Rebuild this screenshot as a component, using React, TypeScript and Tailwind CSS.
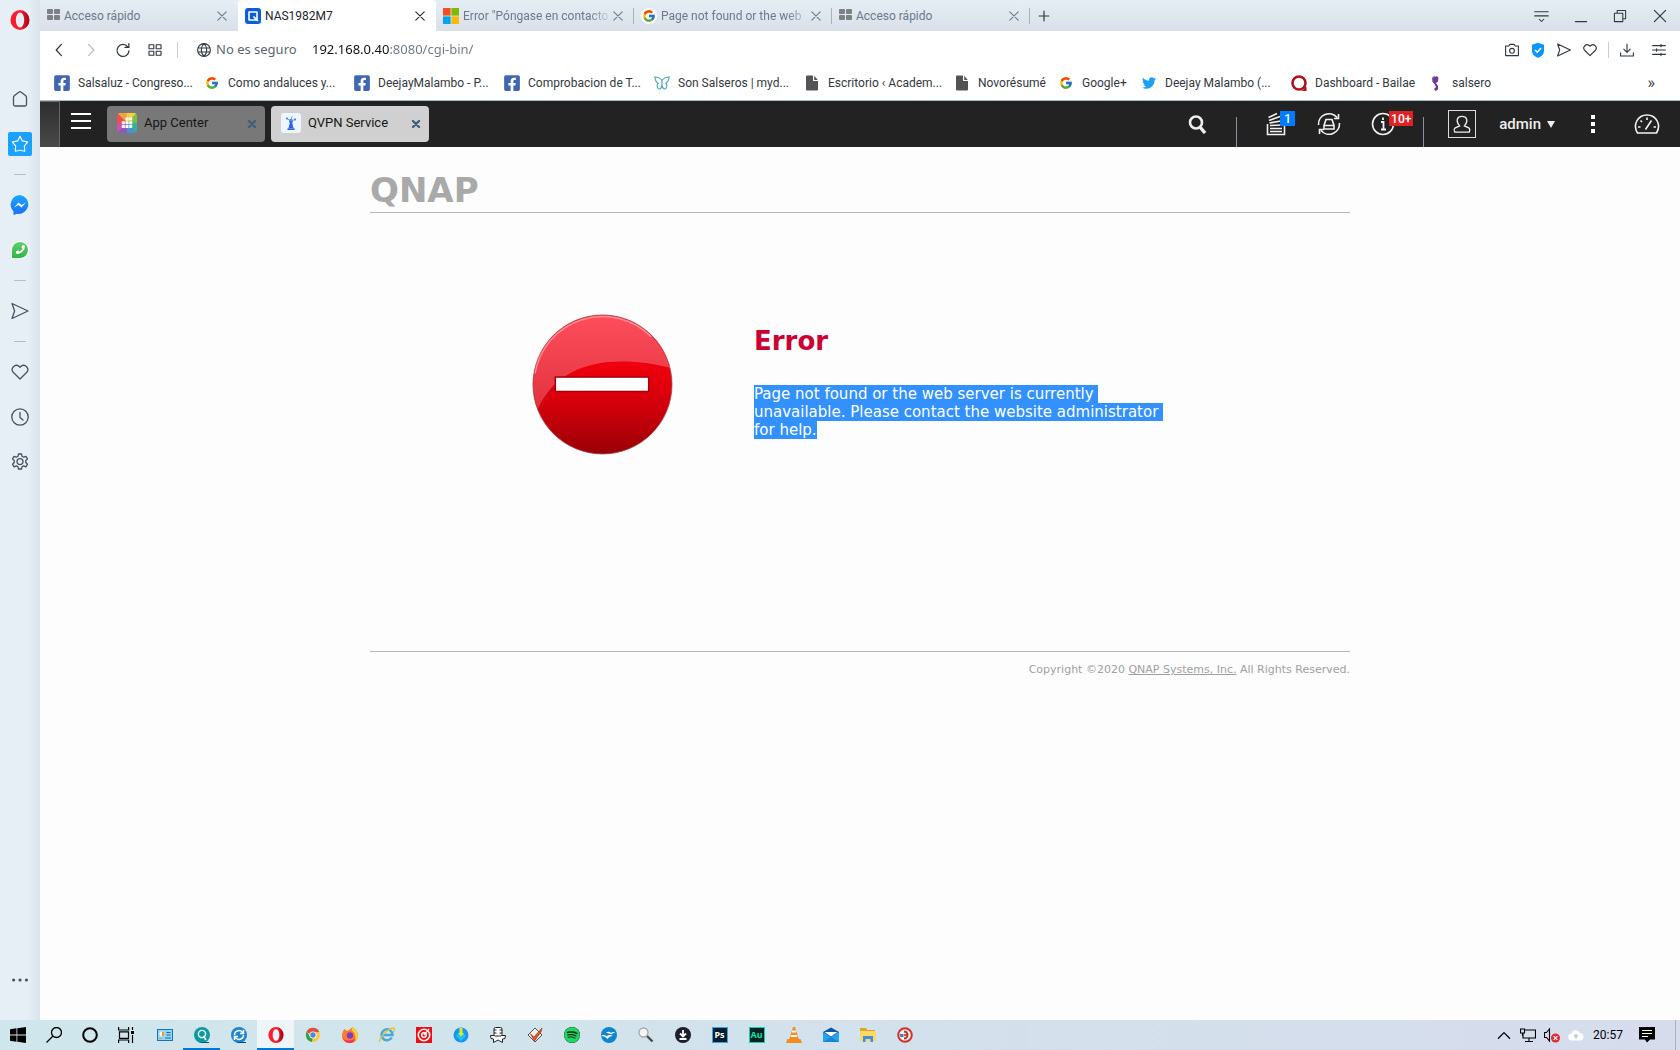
import { useState } from 'react';
import type { ReactNode } from 'react';
import clsx from 'clsx';
import { FcGoogle } from 'react-icons/fc';
import { FaFacebookSquare, FaTwitter, FaSpotify, FaPhoneAlt } from 'react-icons/fa';

/* ---------- icons ---------- */

type IconProps = { className?: string };

function Line({ className = 'size-5', d, width = 1.3 }: IconProps & { d: string; width?: number }) {
  return (
    <svg
      className={className}
      viewBox="0 0 20 20"
      fill="none"
      stroke="currentColor"
      strokeWidth={width}
      strokeLinecap="round"
      strokeLinejoin="round"
      aria-hidden="true"
    >
      <path d={d} />
    </svg>
  );
}

const paths = {
  home: 'M8.8 3.200Q10 2.200 11.200 3.200L15.500 6.600Q16.500 7.500 16.500 8.500V15.500a1.500 1.500 0 0 1-1.500 1.500H5a1.500 1.500 0 0 1-1.500-1.500V8.500Q3.500 7.500 4.500 6.600Z',
  star: 'M10 1.500 12.500 6.600 18.500 7.800 14.900 12.200 15.200 18 10 17 4.800 18 5.100 12.200 1.500 7.800 7.500 6.600Z',
  send: 'M2 2.500 18 10 2 17.500 4.600 10Z',
  heart: 'M10 17 3.200 10.300A4.200 4.200 0 0 1 9 4.300L10 5.300 11 4.300A4.200 4.200 0 0 1 16.800 10.300Z',
  clock: 'M10 1.800A8.200 8.200 0 1 1 10 18.200 8.200 8.200 0 1 1 10 1.800M10 5.500V10.500L13 13',
  gear: 'M8.500 2h3l.5 2.300 1.700.9 2.200-.9 1.600 2.600-1.700 1.600v2l1.700 1.700-1.600 2.600-2.200-.9-1.700.9-.5 2.200h-3L8 14.800l-1.700-.9-2.200.9-1.600-2.600 1.700-1.700v-2L2.500 6.900l1.600-2.600 2.200.9L8 4.300ZM10 6.700a3 3 0 1 1 0 6 3 3 0 1 1 0-6',
  close: 'M3 3 17 17M17 3 3 17',
  back: 'M13 3 6.500 10 13 17',
  forward: 'M7 3 13.500 10 7 17',
  plus: 'M10 2V18M2 10H18',
  reload: 'M16 6A7.500 7.500 0 1 0 17.500 11M17.300 2V6.800H12.500',
  speedDial: 'M2.500 3.500h6v5h-6ZM11.500 3.500h6v5h-6ZM2.500 11.500h6v5h-6ZM11.500 11.500h6v5h-6Z',
  globe: 'M10 2A8 8 0 1 1 10 18 8 8 0 1 1 10 2M10 2C5.500 6 5.500 14 10 18M10 2C14.500 6 14.500 14 10 18M2.500 7.500H17.500M2.500 12.500H17.500',
  camera: 'M2 5H6L7.500 3H12.500L14 5H18V17H2ZM10 8A3 3 0 1 1 10 14 3 3 0 1 1 10 8',
  download: 'M10 2.500V12.500M6 9 10 13 14 9M2 13.500V17.500H18V13.500',
  sliders: 'M2 4.500H18M2 10H18M2 15.500H18M12.500 3V6M7 8.500V11.500M12.500 14V17',
  more: 'M2 10h.1M10 10h.1M18 10h.1',
};

function OperaIcon({ className = 'size-5' }: IconProps) {
  return (
    <svg className={className} viewBox="0 0 20 20" aria-hidden="true">
      <defs>
        <linearGradient id="opera" x1="0" x2="1">
          <stop offset="0" stopColor="#ff1b2d" />
          <stop offset=".55" stopColor="#fa1e2e" />
          <stop offset="1" stopColor="#a00213" />
        </linearGradient>
      </defs>
      <path
        fill="url(#opera)"
        fillRule="evenodd"
        d="M10 0a9.500 10 0 1 1 0 20 9.500 10 0 1 1 0-20ZM10 2.600a4.200 7.400 0 1 0 0 14.800 4.200 7.400 0 1 0 0-14.800Z"
      />
    </svg>
  );
}

function SpeedDialIcon() {
  return (
    <svg className="size-[13px]" viewBox="0 0 13 13" fill="#7d8084" aria-hidden="true">
      <rect width="6" height="5" rx="1" />
      <rect x="7" width="6" height="5" rx="1" />
      <rect y="6" width="6" height="5" rx="1" />
      <rect x="7" y="6" width="6" height="5" rx="1" />
    </svg>
  );
}

function NasIcon() {
  return (
    <svg className="size-4" viewBox="0 0 16 16" aria-hidden="true">
      <rect width="16" height="16" rx="3" fill="#0a5fd8" />
      <path d="M4 4h8v8H4Z" fill="none" stroke="#fff" strokeWidth="1.600" strokeLinejoin="round" />
      <path d="m8.500 8.500 4.500 4.500" stroke="#fff" strokeWidth="1.600" />
    </svg>
  );
}

function MicrosoftIcon() {
  return (
    <svg className="size-4" viewBox="0 0 16 16" aria-hidden="true">
      <path fill="#f25022" d="M0 0h7.600v7.600H0z" />
      <path fill="#7fba00" d="M8.400 0H16v7.600H8.400z" />
      <path fill="#00a4ef" d="M0 8.400h7.600V16H0z" />
      <path fill="#ffb900" d="M8.400 8.400H16V16H8.400z" />
    </svg>
  );
}

function DocIcon() {
  return (
    <svg className="size-4" viewBox="0 0 16 16" fill="#535457" aria-hidden="true">
      <path d="M2 1.500a1 1 0 0 1 1-1h6V6h5v8.500a1 1 0 0 1-1 1H3a1 1 0 0 1-1-1ZM10.200.8 13.800 5h-3.600Z" />
    </svg>
  );
}

function ButterflyIcon() {
  return (
    <svg className="size-4" viewBox="0 0 16 16" fill="none" stroke="#4fa9b5" strokeWidth="1.200" aria-hidden="true">
      <path d="M8 5.500C6.500 3 3.500 2 .8 2c.4 3 1.600 5.500 3.400 6.300C2.500 9.500 3 13 5 14c1.500 0 2.500-1.500 3-3.500.5 2 1.500 3.500 3 3.500 2-1 2.500-4.500.8-5.700C13.600 7.500 14.800 5 15.200 2 12.500 2 9.500 3 8 5.500Zm0 0v6" />
    </svg>
  );
}

function BailaeIcon() {
  return (
    <svg className="size-4" viewBox="0 0 16 16" aria-hidden="true">
      <circle cx="8" cy="8" r="6.500" fill="none" stroke="#a81419" strokeWidth="2.600" />
      <path d="M9 16c3 0 4-2 5-4h1.500v4Z" fill="#a81419" />
    </svg>
  );
}

function SalseroIcon() {
  return (
    <svg className="size-4" viewBox="0 0 16 16" fill="#6f3b93" aria-hidden="true">
      <path d="M4 1.500 5 3l1-2.500L7 2l2-1 1.500 2-.5 3.500L8 8l2 3v3.500L7.500 16 6 14l2-2-1.500-3-2-2Z" />
    </svg>
  );
}

function ShieldIcon() {
  return (
    <svg className="size-4" viewBox="0 0 16 16" aria-hidden="true">
      <path d="M8 .8 14 2.800V8.500c0 4-2.500 6-6 7.200C4.500 14.500 2 12.500 2 8.500V2.800Z" fill="#0a95ff" />
      <path d="m5 8 2.200 2.200L11 6" fill="none" stroke="#fff" strokeWidth="1.600" />
    </svg>
  );
}

/* ---------- browser chrome ---------- */

const browserTabs = [
  { id: 1, title: 'Acceso rápido', icon: <SpeedDialIcon /> },
  { id: 2, title: 'NAS1982M7', icon: <NasIcon /> },
  { id: 3, title: 'Error "Póngase en contacto', icon: <MicrosoftIcon /> },
  {
    id: 4,
    title: 'Page not found or the web',
    icon: (
      <span className="rounded-full bg-white p-px">
        <FcGoogle className="size-[14px]" />
      </span>
    ),
  },
  { id: 5, title: 'Acceso rápido', icon: <SpeedDialIcon /> },
];

function TabBar() {
  const [active, setActive] = useState(2);

  return (
    <div className="flex h-[31px] items-stretch bg-linear-to-b from-[#e5edf5] to-[#d9e0e9] text-[#6d7a88]">
      {browserTabs.map((tab) => (
        <div
          key={tab.id}
          className={clsx(
            'flex w-[198px] shrink-0 items-center',
            tab.id === active && 'rounded-t-sm bg-white text-[#20262e]'
          )}
        >
          <button onClick={() => setActive(tab.id)} className="flex min-w-0 flex-1 items-center gap-1 pl-[7px]">
            {tab.icon}
            <span
              className={clsx(
                'flex-1 text-left font-[Roboto,sans-serif] text-xs whitespace-nowrap',
                (tab.id === 3 || tab.id === 4) && 'mask-r-from-85%'
              )}
            >
              {tab.title}
            </span>
          </button>
          <button aria-label={`Cerrar ${tab.title}`} className="mr-[9px]">
            <Line d={paths.close} className="size-3" width={1.8} />
          </button>
          <span className={clsx('h-4 w-px', tab.id >= 3 ? 'bg-[#a9b1ba]' : 'bg-transparent')} />
        </div>
      ))}
      <button aria-label="Nueva pestaña" className="ml-2 text-[#303840]">
        <Line d={paths.plus} className="size-3" width={2} />
      </button>
      <div className="mr-3 ml-auto flex items-center gap-[25px] text-[#303840]">
        <button aria-label="Menú de pestañas">
          <Line d="M1 5H19M1 10.500H19M7 15l3 3 3-3" className="size-[15px]" width={1.400} />
        </button>
        <button aria-label="Minimizar">
          <Line d="M2 18H18" className="size-[14px]" width={1.600} />
        </button>
        <button aria-label="Restaurar">
          <Line d="M2 6H14V18H2ZM6 6V2H18V14H14" className="size-[14px]" width={1.500} />
        </button>
        <button aria-label="Cerrar">
          <Line d={paths.close} className="size-4" width={1.500} />
        </button>
      </div>
    </div>
  );
}

function AddressBar() {
  const [url, setUrl] = useState('192.168.0.40:8080/cgi-bin/');

  return (
    <div className="flex h-[38px] items-center pr-[13px] pl-[11px] text-[#2f3740]">
      <div className="flex items-center gap-4">
        <button aria-label="Atrás">
          <Line d={paths.back} className="size-4" width={1.600} />
        </button>
        <button aria-label="Adelante" className="text-[#b9bec4]">
          <Line d={paths.forward} className="size-4" width={1.600} />
        </button>
        <button aria-label="Recargar">
          <Line d={paths.reload} className="size-4" width={1.600} />
        </button>
        <button aria-label="Acceso rápido">
          <Line d={paths.speedDial} className="size-4" width={1.400} />
        </button>
      </div>
      <span className="mr-[18px] ml-[14px] h-4 w-px bg-[#c9cdd2]" />
      <Line d={paths.globe} className="size-4" width={1.400} />
      <span className="ml-1 w-[96px] text-[13px] text-[#5c6670]">No es seguro</span>
      <input
        aria-label="Dirección"
        value={url}
        onChange={(e) => setUrl(e.target.value)}
        className="min-w-0 flex-1 bg-linear-[to_right,#111_78px,#6a7785_78px] bg-clip-text text-[13px] text-transparent outline-none"
      />
      <div className="flex items-center gap-[10px]">
        <button aria-label="Instantánea">
          <Line d={paths.camera} className="size-4" width={1.400} />
        </button>
        <button aria-label="Bloqueador de anuncios">
          <ShieldIcon />
        </button>
        <button aria-label="Enviar a Mi flujo">
          <Line d={paths.send} className="size-4" width={1.400} />
        </button>
        <button aria-label="Añadir a marcadores">
          <Line d={paths.heart} className="size-4" width={1.400} />
        </button>
        <span className="h-4 w-px bg-[#c9cdd2]" />
        <button aria-label="Descargas">
          <Line d={paths.download} className="size-4" width={1.400} />
        </button>
        <button aria-label="Configuración rápida" className="ml-[6px]">
          <Line d={paths.sliders} className="size-4" width={1.400} />
        </button>
      </div>
    </div>
  );
}

const facebook = <FaFacebookSquare className="size-[18px] text-[#4267b2]" />;

const bookmarks = [
  { label: 'Salsaluz - Congreso...', icon: facebook, width: 'w-[150px]' },
  { label: 'Como andaluces y...', icon: <FcGoogle className="size-[14px]" />, width: 'w-[150px]' },
  { label: 'DeejayMalambo - P...', icon: facebook, width: 'w-[150px]' },
  { label: 'Comprobacion de T...', icon: facebook, width: 'w-[150px]' },
  { label: 'Son Salseros | myd...', icon: <ButterflyIcon />, width: 'w-[150px]' },
  { label: 'Escritorio ‹ Academ...', icon: <DocIcon />, width: 'w-[150px]' },
  { label: 'Novorésumé', icon: <DocIcon />, width: 'w-[104px]' },
  { label: 'Google+', icon: <FcGoogle className="size-[14px]" />, width: 'w-[83px]' },
  { label: 'Deejay Malambo (...', icon: <FaTwitter className="size-[14px] text-[#1da1f2]" />, width: 'w-[150px]' },
  { label: 'Dashboard - Bailae', icon: <BailaeIcon />, width: 'w-[137px]' },
  { label: 'salsero', icon: <SalseroIcon />, width: 'w-[70px]' },
];

function BookmarksBar() {
  return (
    <nav className="flex h-[32px] items-center border-b border-[#a9bccb] pb-[3px] pl-[14px] font-[Roboto,sans-serif] text-xs text-[#33383e]">
      {bookmarks.map((item) => (
        <a
          key={item.label}
          href="#"
          className={clsx('flex shrink-0 items-center gap-2 whitespace-nowrap', item.width)}
        >
          <span className="flex w-4 shrink-0 justify-center">{item.icon}</span>
          {item.label}
        </a>
      ))}
      <button aria-label="Más marcadores" className="mr-[25px] ml-auto text-base leading-4">
        »
      </button>
    </nav>
  );
}

const sidebarItems: { label: string; icon: ReactNode; divider?: boolean }[] = [
  { label: 'Inicio', icon: <Line d={paths.home} /> },
  {
    label: 'Acceso rápido',
    icon: (
      <span className="flex size-6 items-center justify-center rounded-xs bg-[#1ba1ff] text-white">
        <Line d={paths.star} className="size-[18px]" />
      </span>
    ),
  },
  {
    label: 'Messenger',
    icon: (
      <svg className="size-5" viewBox="0 0 20 20" aria-hidden="true">
        <defs>
          <linearGradient id="messenger" x2="0" y2="1">
            <stop stopColor="#19a9fb" />
            <stop offset="1" stopColor="#1a6dff" />
          </linearGradient>
        </defs>
        <path d="M10 0a9.800 9.500 0 1 1-3 18.800L3.500 20v-3.500A9.700 9.700 0 0 1 10 0Z" fill="url(#messenger)" />
        <path d="m4 12.500 4.500-5 3 2.500L16 7.500l-4.500 5L8.500 10Z" fill="#fff" />
      </svg>
    ),
    divider: true,
  },
  {
    label: 'WhatsApp',
    icon: (
      <span className="flex size-[18px] items-center justify-center rounded-full rounded-bl-sm border border-white bg-linear-to-b from-[#5fd06a] to-[#2fb446] text-white">
        <FaPhoneAlt className="size-[9px] -scale-x-100" />
      </span>
    ),
  },
  { label: 'Mi flujo', icon: <Line d={paths.send} className="size-5" />, divider: true },
  { label: 'Marcadores', icon: <Line d={paths.heart} />, divider: true },
  { label: 'Historial', icon: <Line d={paths.clock} /> },
  { label: 'Configuración', icon: <Line d={paths.gear} /> },
];

function Sidebar() {
  return (
    <aside className="flex w-10 shrink-0 flex-col items-center bg-linear-to-r from-[#e6eef6] from-70% to-[#dae2eb] text-[#47525e]">
      <button aria-label="Opera" className="mt-[10px] mb-[46px]">
        <OperaIcon />
      </button>
      {sidebarItems.map((item) => (
        <div key={item.label} className="flex flex-col items-center">
          {item.divider && <span className="mt-2 mb-[7px] h-px w-3 bg-[#b0bfcd]" />}
          <button aria-label={item.label} className="flex h-[45px] w-10 items-center justify-center">
            {item.icon}
          </button>
        </div>
      ))}
      <button aria-label="Más" className="mt-auto mb-8">
        <Line d={paths.more} className="size-4" width={3.800} />
      </button>
    </aside>
  );
}

/* ---------- QTS desktop ---------- */

function AppCenterIcon() {
  return (
    <svg className="size-5" viewBox="0 0 20 20" aria-hidden="true">
      <defs>
        <clipPath id="app-center">
          <rect width="20" height="20" rx="3" />
        </clipPath>
      </defs>
      <g clipPath="url(#app-center)">
        <path fill="#f3a23c" d="M10 10 0 0h10Z" />
        <path fill="#f4d23d" d="M10 10V0h10Z" />
        <path fill="#79c143" d="M10 10 20 0v10Z" />
        <path fill="#35b39a" d="M10 10h10v10Z" />
        <path fill="#4b8fd6" d="M10 10 20 20H10Z" />
        <path fill="#8b5bc4" d="M10 10v10H0Z" />
        <path fill="#d64fa1" d="M10 10 0 20V10Z" />
        <path fill="#ec4f4f" d="M10 10H0V0Z" />
      </g>
      <g fill="#fff">
        <path d="M8.500 4.500h3v3h-3zM12.200 4.500h3v3h-3zM4.800 8.200h3v3h-3zM8.500 8.200h3v3h-3zM12.200 8.200h3v3h-3zM4.800 12h3v3h-3zM8.500 12h3v3h-3zM12.200 12h3v3h-3z" />
      </g>
    </svg>
  );
}

function QvpnIcon() {
  return (
    <svg className="size-5" viewBox="0 0 20 20" aria-hidden="true">
      <rect width="20" height="20" rx="3" fill="#eef5fd" />
      <g fill="#2d62e8">
        <circle cx="10" cy="8" r="2" />
        <path d="M9 9h2l1.500 6h-5ZM6.500 15.200h7V17h-7Z" />
        <circle cx="6" cy="5.500" r="1" />
        <circle cx="14" cy="6.500" r="1" />
      </g>
      <path d="m6 5.500 4 2.500 4-1.500M10 8l1-4.500" stroke="#54a4ee" fill="none" />
    </svg>
  );
}

const appTabs = [
  { name: 'App Center', icon: <AppCenterIcon />, color: 'bg-[#787878]' },
  { name: 'QVPN Service', icon: <QvpnIcon />, color: 'bg-[#d0d0d0]' },
];

function QtsHeader() {
  return (
    <header className="flex h-[46px] shrink-0 items-stretch bg-[#222] font-[Roboto,sans-serif] text-white">
      <div className="w-5 border-t border-r border-[#666] bg-linear-to-b from-[#2d2d2d] to-[#4a4a4a]" />
      <button aria-label="Menú principal" className="mr-4 ml-[11px] flex flex-col gap-[5px] pt-3">
        <span className="h-[2px] w-5 bg-white" />
        <span className="h-[2px] w-5 bg-white" />
        <span className="h-[2px] w-5 bg-white" />
      </button>
      <div className="flex gap-[6px] py-[5px]">
        {appTabs.map((tab) => (
          <div
            key={tab.name}
            className={clsx('flex w-[158px] items-center rounded-sm pr-[7px] pl-[10px] text-[#161616]', tab.color)}
          >
            <button className="flex flex-1 items-center gap-[7px] pb-[2px] text-[13px] leading-5">
              {tab.icon}
              {tab.name}
            </button>
            <button aria-label={`Cerrar ${tab.name}`} className="text-[#3f5f7c]">
              <Line d="M5 5 15 15M15 5 5 15" className="size-3" width={4} />
            </button>
          </div>
        ))}
      </div>

      <div className="ml-auto flex items-center">
        <button aria-label="Buscar" className="mr-[29px]">
          <svg className="size-5" viewBox="0 0 20 20" fill="none" stroke="#eee" strokeWidth="2.600" aria-hidden="true">
            <circle cx="9" cy="8.500" r="6" />
            <path d="m13 13 5 6" strokeWidth="3.400" />
          </svg>
        </button>
        <span className="h-[30px] w-px self-end bg-[#8f8fa8]" />
        <button aria-label="Tareas en segundo plano" className="relative ml-[29px] flex h-full items-center">
          <svg className="h-6 w-5" viewBox="0 0 20 24" fill="none" stroke="#f2f2f2" strokeWidth="1.600" aria-hidden="true">
            <path d="M1.500 12v10.500h17V12M4 19.500h12M4 16.500h12M4 13.500l12-.5M3.500 11l11.500-2M3 8.500l11-4M2.500 5.500 11 1.500" />
          </svg>
          <span className="absolute top-[10px] left-[14px] h-[15px] w-[15px] bg-[#007cff] text-center text-xs leading-4 font-medium">
            1
          </span>
        </button>
        <button aria-label="Dispositivos externos" className="ml-[31px]">
          <svg className="size-6" viewBox="0 0 24 24" fill="none" stroke="#f2f2f2" strokeWidth="1.600" aria-hidden="true">
            <path d="M1.500 13A10.500 10.500 0 0 1 20 5.500M22.500 11A10.500 10.500 0 0 1 4 18.500M21.500 2v4.500H17M2.500 22v-4.500H7" />
            <path d="M9 7.500h6l2 6v3.500H7v-3.500ZM7 13.500h10" />
          </svg>
        </button>
        <button aria-label="Notificaciones" className="relative ml-[30px] flex h-full items-center">
          <svg className="size-6" viewBox="0 0 24 24" fill="none" stroke="#f2f2f2" strokeWidth="1.600" aria-hidden="true">
            <circle cx="12" cy="12" r="10.500" />
            <path d="M10 10h2.500v7.500M10 17.500h5M12 5.500v2.500" strokeWidth="1.800" />
          </svg>
          <span className="absolute top-[10px] left-[18px] h-[15px] w-6 bg-[#df2226] text-center text-xs leading-4 font-medium">
            10+
          </span>
        </button>
        <span className="ml-7 h-[30px] w-px self-end bg-[#8f8fa8]" />
        <button className="ml-6 flex items-center gap-[23px] text-[15px] leading-5 font-medium text-[#eee]">
          <span className="border border-[#ddd] p-px">
            <svg className="h-6 w-6" viewBox="0 0 24 25" fill="none" stroke="#eee" strokeWidth="1.400" aria-hidden="true">
              <path d="M9.500 14.500C5 9 7 4.500 12 4.500s7 4.500 2.500 10l4.500 2c1 .5 1.500 2.500.5 4.500h-15c-1-2-.5-4 .5-4.500Z" />
            </svg>
          </span>
          <span className="flex items-center gap-[6px]">
            admin
            <svg className="h-[7px] w-2" viewBox="0 0 8 7" fill="#eee" aria-hidden="true">
              <path d="M0 0h8L4 7Z" />
            </svg>
          </span>
        </button>
        <button aria-label="Más opciones" className="ml-9 flex flex-col gap-[3px]">
          <span className="size-1 bg-white" />
          <span className="size-1 bg-white" />
          <span className="size-1 bg-white" />
        </button>
        <button aria-label="Panel" className="mr-5 ml-[39px]">
          <svg className="h-5 w-[26px]" viewBox="0 0 26 20" fill="none" stroke="#f2f2f2" strokeWidth="1.600" aria-hidden="true">
            <path d="M3.500 19C-1.500 11 3.500 1 13 1s14.500 10 9.500 18ZM13 3.500V6M4 13h2.500M19.500 13H22M6.500 6.500 8 8M11.500 15.500 17.500 6.500" />
          </svg>
        </button>
      </div>
    </header>
  );
}

function ErrorIcon() {
  return (
    <svg className="size-[141px] shrink-0" viewBox="0 0 142 142" role="img" aria-label="Error">
      <defs>
        <linearGradient id="disc" x2="0" y2="1">
          <stop offset=".3" stopColor="#f4000d" />
          <stop offset=".65" stopColor="#d2000b" />
          <stop offset="1" stopColor="#990007" />
        </linearGradient>
        <linearGradient id="gloss" x2="0" y2="1">
          <stop stopColor="#ff5562" />
          <stop offset="1" stopColor="#e23642" />
        </linearGradient>
        <clipPath id="disc-clip">
          <circle cx="71" cy="71" r="69.500" />
        </clipPath>
      </defs>
      <circle cx="71" cy="71" r="70" fill="url(#disc)" stroke="#a04a52" strokeWidth=".8" />
      <path
        d="M0 0h142v55C92 42 28 42 5 98H0Z"
        fill="url(#gloss)"
        clipPath="url(#disc-clip)"
        opacity=".92"
      />
      <path d="M3 60A69 69 0 0 1 120 23" fill="none" stroke="#ff9aa3" strokeWidth="1.500" opacity=".8" />
      <rect x="23.500" y="63.500" width="94" height="14.500" fill="#fff" stroke="#a3000b" strokeWidth="1.500" />
    </svg>
  );
}

function ErrorPage() {
  return (
    <main className="flex-1 bg-[#fefefe] bg-[repeating-conic-gradient(#fcfcfc_0_25%,transparent_0_50%)] bg-size-[4px_4px] font-['DejaVu_Sans',sans-serif]">
      <div className="mx-auto w-full max-w-[980px] pt-6">
        <div className="flex h-[42px] items-center border-b border-[#b5b5b5] pb-1 text-[34px] leading-8 font-bold text-[#a9a9a9]">
          QNAP
        </div>
        <div className="flex h-[438px] items-start gap-[81px] pt-[101px] pl-[162px]">
          <ErrorIcon />
          <div className="pt-[9px]">
            <h1 className="text-[26px] leading-9 font-bold text-[#cc0033]">Error</h1>
            <p className="mt-[26px] text-[15px] leading-[18px] whitespace-pre text-white">
              <span className="block w-fit bg-[#3390ff]">{'Page not found or the web server is currently '}</span>
              <span className="block w-fit bg-[#3390ff]">{'unavailable. Please contact the website administrator '}</span>
              <span className="block w-fit bg-[#3390ff]">for help.</span>
            </p>
          </div>
        </div>
        <footer className="border-t border-[#b5b5b5] pt-2 text-right text-[11px] leading-5 text-[#a0a0a0]">
          Copyright ©2020{' '}
          <a href="#" className="underline">
            QNAP Systems, Inc.
          </a>{' '}
          All Rights Reserved.
        </footer>
      </div>
    </main>
  );
}

/* ---------- Windows taskbar ---------- */

function Glyph({ children }: { children: ReactNode }) {
  return (
    <svg className="size-4" viewBox="0 0 16 16" aria-hidden="true">
      {children}
    </svg>
  );
}

const systemButtons = [
  {
    label: 'Inicio de Windows',
    icon: <Glyph><path d="M0 2.200 6.500 1.300V7.600H0ZM7.300 1.200 16 0V7.600H7.300ZM0 8.400H6.500V14.700L0 13.800ZM7.300 8.400H16V16L7.300 14.800Z" /></Glyph>,
  },
  {
    label: 'Buscar en Windows',
    icon: <Glyph><g fill="none" stroke="#000" strokeWidth="1.300"><circle cx="10.500" cy="5.500" r="5" /><path d="M7 9 .5 15.500" /></g></Glyph>,
  },
  { label: 'Cortana', icon: <Glyph><circle cx="8" cy="8" r="6.800" fill="none" stroke="#000" strokeWidth="2" /></Glyph> },
  {
    label: 'Vista de tareas',
    icon: <Glyph><path d="M.6 0v3h10V0M.6 16v-3h10v3M1.500 4.800h9v6.500h-9ZM14.500 0v3M14.500 8v8" fill="none" stroke="#000" strokeWidth="1.200" /><path d="M13 4h3v3h-3z" /></Glyph>,
  },
];

const taskbarApps: { label: string; icon: ReactNode; state?: 'open' | 'active' }[] = [
  {
    label: 'Panel de control',
    icon: <Glyph><rect y="2" width="16" height="12" fill="#1b74ad" /><path fill="#8fd8f8" d="M1 3h14v10H1z" /><circle cx="5" cy="7" r="2.500" fill="#fff" /><path fill="#f2932c" d="M5 7V4.500A2.500 2.500 0 0 1 5 9.500ZM2 11h3v1H2z" /><path d="M9.500 5.500h4M9.500 8h4M8 11h6" stroke="#1769a5" /></Glyph>,
  },
  {
    label: 'Qfinder Pro',
    icon: <Glyph><circle cx="8" cy="8" r="8" fill="#0f9aa3" /><path d="M8 15h7v1H5Z" fill="#055c65" /><circle cx="8" cy="7" r="3.600" fill="none" stroke="#fff" strokeWidth="1.400" /><path d="m9.500 9 2.500 4" stroke="#fff" strokeWidth="1.500" /></Glyph>,
    state: 'open',
  },
  {
    label: 'Qsync Client',
    icon: <Glyph><circle cx="8" cy="8" r="8" fill="#1c87cd" /><path d="M8 15h7v1H5Z" fill="#0b4778" /><path d="M3.500 8A4.500 4.500 0 0 1 12 6M12.500 8A4.500 4.500 0 0 1 4 10M12.500 3v3.500H9M3.500 13V9.500H7" fill="none" stroke="#fff" strokeWidth="1.500" /></Glyph>,
  },
  { label: 'Opera', icon: <OperaIcon className="size-4" />, state: 'active' },
  {
    label: 'Chrome',
    icon: <Glyph><circle cx="8" cy="8" r="7" fill="#fbc940" /><path fill="#dd4f42" d="M8 8 1.500 5A7 7 0 0 1 14.300 5H8Z" /><path fill="#2ea04f" d="M8 8 7 15A7 7 0 0 1 1.800 4.600L5 10Z" /><circle cx="8" cy="8" r="3.500" fill="#fff" /><circle cx="8" cy="8" r="2.700" fill="#4a86e8" /></Glyph>,
  },
  {
    label: 'Firefox',
    icon: <Glyph><path fill="#ff7a2d" d="M1 4 2.500 2 5 4C8 3 9 1 10.500 0 15 3 16 6 16 9A8 7.500 0 0 1 0 8.500C0 7 .5 5.500 1 4Z" /><path fill="#ffcf3a" d="M10.500 0C15 3 16 6 16 9c0 2-1 4-2.500 5C14 8 12 5 9.500 3Z" /><path fill="#f0325b" d="M0 8.500C1 13 4 14 8 13.500s5-2 5-3C13 14 10 16 8 16A8 7.500 0 0 1 0 8.500Z" /><circle cx="8" cy="8.500" r="3.200" fill="#7540c9" /></Glyph>,
  },
  {
    label: 'Internet Explorer',
    icon: <Glyph><path d="M12.800 10.500A5.500 5.500 0 1 1 13.500 8H4" fill="none" stroke="#41a9e0" strokeWidth="2.500" /><path d="M1 15C-1 12 9 1 14.500 1 16 1 15.500 3.500 14.500 5" fill="none" stroke="#f3bd28" strokeWidth="1.400" /></Glyph>,
  },
  {
    label: 'Target',
    icon: <Glyph><path fill="#f20d14" d="M0 0h16v16H0z" /><circle cx="8" cy="8" r="5.700" fill="none" stroke="#fff" strokeWidth="1.600" /><circle cx="8" cy="8" r="2.300" fill="none" stroke="#fff" strokeWidth="1.500" /><path d="m8 8 5-6" stroke="#fff" strokeWidth="1.300" /></Glyph>,
  },
  {
    label: 'Descargas',
    icon: <Glyph><circle cx="8" cy="8" r="7.500" fill="#1696f5" /><path fill="#20c4ea" d="m8 4 5 5-5 5-5-5Z" /><path fill="#d9ee1c" d="M6.500 1h3v5H11L8 9.500 5 6h1.500Z" /></Glyph>,
  },
  {
    label: 'Grabadora',
    icon: <Glyph><g fill="#fff" stroke="#222"><path d="M.5 8.500h15l-.5 3-2.500.5v3.500L8 13l-4.500 2.500V12L1 11.500Z" /><rect x="4" y=".5" width="8" height="8.500" rx="1.500" /><path d="M4 3h2.500M9.500 3H12M4 6h2.500M9.500 6H12" /></g></Glyph>,
  },
  {
    label: 'Tareas',
    icon: <Glyph><path d="m8 1 7 7-7 7-7-7Z" fill="#e9eef2" stroke="#555" /><path d="m3.500 7 3.500 3 8-9-1 4-6.500 9Z" fill="#e8541a" stroke="#9c2a0c" strokeWidth=".6" /></Glyph>,
  },
  {
    label: 'Spotify',
    icon: <span className="rounded-full bg-[#10281a]"><FaSpotify className="size-4 text-[#1ed760]" /></span>,
  },
  {
    label: 'OpenOffice',
    icon: <Glyph><circle cx="8" cy="8" r="8" fill="#0e85cd" /><path d="M5 6c2-2 4-1 5 0 1-1 3-1.500 5-.5-2 0-3 .5-4.500 2C9 6.500 7 6 5 6ZM0 9c2-1.500 4-1 5.500.5C7 8 9 7.500 12 9c-3 0-4 1-5.500 3C5 10 3 9 0 9Z" fill="#fff" /></Glyph>,
  },
  {
    label: 'Lupa',
    icon: <Glyph><path d="m8.500 8.500 6 6" stroke="#4c4c4c" strokeWidth="2.400" /><circle cx="5.500" cy="5.500" r="4.500" fill="#f2f6f9" stroke="#aaa" strokeWidth="1.400" /></Glyph>,
  },
  {
    label: 'JDownloader',
    icon: <Glyph><circle cx="8" cy="8" r="8" fill="#1c1f29" /><path d="M8 3v5M5 6.500 8 9.500l3-3M4.500 12h7" stroke="#fff" strokeWidth="1.800" fill="none" /></Glyph>,
  },
  {
    label: 'Photoshop',
    icon: <span className="block size-4 border border-[#2fa9e0] bg-[#031d2c] text-center text-[9px] leading-[14px] font-bold text-white">Ps</span>,
  },
  {
    label: 'Audition',
    icon: <span className="block size-4 border border-[#12cfae] bg-[#05251f] text-center text-[9px] leading-[14px] font-bold text-[#12dfba]">Au</span>,
  },
  {
    label: 'VLC',
    icon: <Glyph><path fill="#f58a1f" d="M7 0h2l4 13H3ZM1.500 12h13L16 16H0Z" /><path d="M6 4.500h4M4.800 9h6.400" stroke="#fff" strokeWidth="2" /></Glyph>,
  },
  {
    label: 'Correo',
    icon: <Glyph><path fill="#0c56a5" d="M0 5 8 .5 16 5v10H0Z" /><path fill="#fff" d="M1.500 5h13L8 9.500Z" /><path fill="#27a4ee" d="m0 5 8 5 8-5v10H0Z" /><path fill="#1583d8" d="m8 10 8 5H0Z" /></Glyph>,
  },
  {
    label: 'Explorador de archivos',
    icon: <Glyph><path fill="#e0a61e" d="M0 1h6l1.500 2H15v3H0Z" /><path fill="#fdd768" d="M0 4h16v10H0Z" /><path fill="#3a92dc" d="M3 9h10v6h-2.500v-3h-5v3H3Z" /></Glyph>,
  },
  {
    label: 'CCleaner',
    icon: <Glyph><circle cx="8" cy="8" r="6.800" fill="#f3f3f3" stroke="#d23029" strokeWidth="2" /><path d="M7 4.500a3.500 3.500 0 1 1 0 7" fill="none" stroke="#c92d25" strokeWidth="2" /><path d="M7 8h4" stroke="#c92d25" strokeWidth="1.500" /><path fill="#3c80b5" d="M2.500 7h4v3h-3z" /></Glyph>,
  },
];

function Taskbar() {
  return (
    <footer className="flex h-[30px] shrink-0 items-stretch bg-linear-to-r from-[#cfe7ec] to-[#d6dcec] text-black">
      {systemButtons.map((item) => (
        <button key={item.label} aria-label={item.label} className="flex w-9 items-center justify-center">
          {item.icon}
        </button>
      ))}
      <div className="ml-[2px] flex">
        {taskbarApps.map((app) => (
          <button
            key={app.label}
            aria-label={app.label}
            className={clsx(
              'flex w-[37px] items-center justify-center border-y-2 border-transparent',
              app.state === 'open' && 'border-b-[#0078d7]',
              app.state === 'active' && 'border-t-[#eef5f9] border-b-[#0078d7] bg-[#eef5f9]'
            )}
          >
            {app.icon}
          </button>
        ))}
      </div>
      <div className="ml-auto flex items-center gap-2">
        <button aria-label="Iconos ocultos">
          <Line d="M3 14 10 7 17 14" className="size-4" width={1.600} />
        </button>
        <Glyph><path d="M4 3h11.500v8H3V6M9 11v3M5 14.500h8M.5 2h4v4h-4ZM2.500 6v3" fill="none" stroke="#000" strokeWidth="1.100" /></Glyph>
        <Glyph><path d="M.5 5.500h2l3-3.500v12l-3-3.500h-2Z" fill="none" stroke="#000" strokeWidth="1.100" /><circle cx="11.500" cy="11" r="4.500" fill="#e02b34" /><path d="m9.700 9.200 3.600 3.600M13.300 9.200l-3.600 3.600" stroke="#fff" strokeWidth="1.200" /></Glyph>
        <Glyph><path d="M4 13.500a3.500 3.500 0 0 1-.5-7A4.500 4.500 0 0 1 12 6a3.800 3.800 0 0 1 .5 7.500Z" fill="#fff" /><path d="M8 12V7.500M6 9.500l2-2 2 2" fill="none" stroke="#c3ccd8" strokeWidth="1.300" /></Glyph>
        <time className="w-8 text-center font-[Roboto,sans-serif] text-xs">20:57</time>
        <button aria-label="Centro de actividades" className="mr-5 ml-[7px]">
          <Glyph><path d="M0 0h16v12.500h-5L8 15.500 6 12.500H0Z" /><path d="M3 3.500h10M3 6.500h10M3 9.500h6" stroke="#fff" strokeWidth="1.200" /></Glyph>
        </button>
      </div>
      <span className="mr-1 w-px bg-[#a9b2c2]" />
    </footer>
  );
}

export default function App() {
  return (
    <div className="flex min-h-screen flex-col bg-white font-['Noto_Sans','Open_Sans',sans-serif]">
      <div className="flex flex-1">
        <Sidebar />
        <div className="flex min-w-0 flex-1 flex-col">
          <TabBar />
          <AddressBar />
          <BookmarksBar />
          <QtsHeader />
          <ErrorPage />
        </div>
      </div>
      <Taskbar />
    </div>
  );
}
